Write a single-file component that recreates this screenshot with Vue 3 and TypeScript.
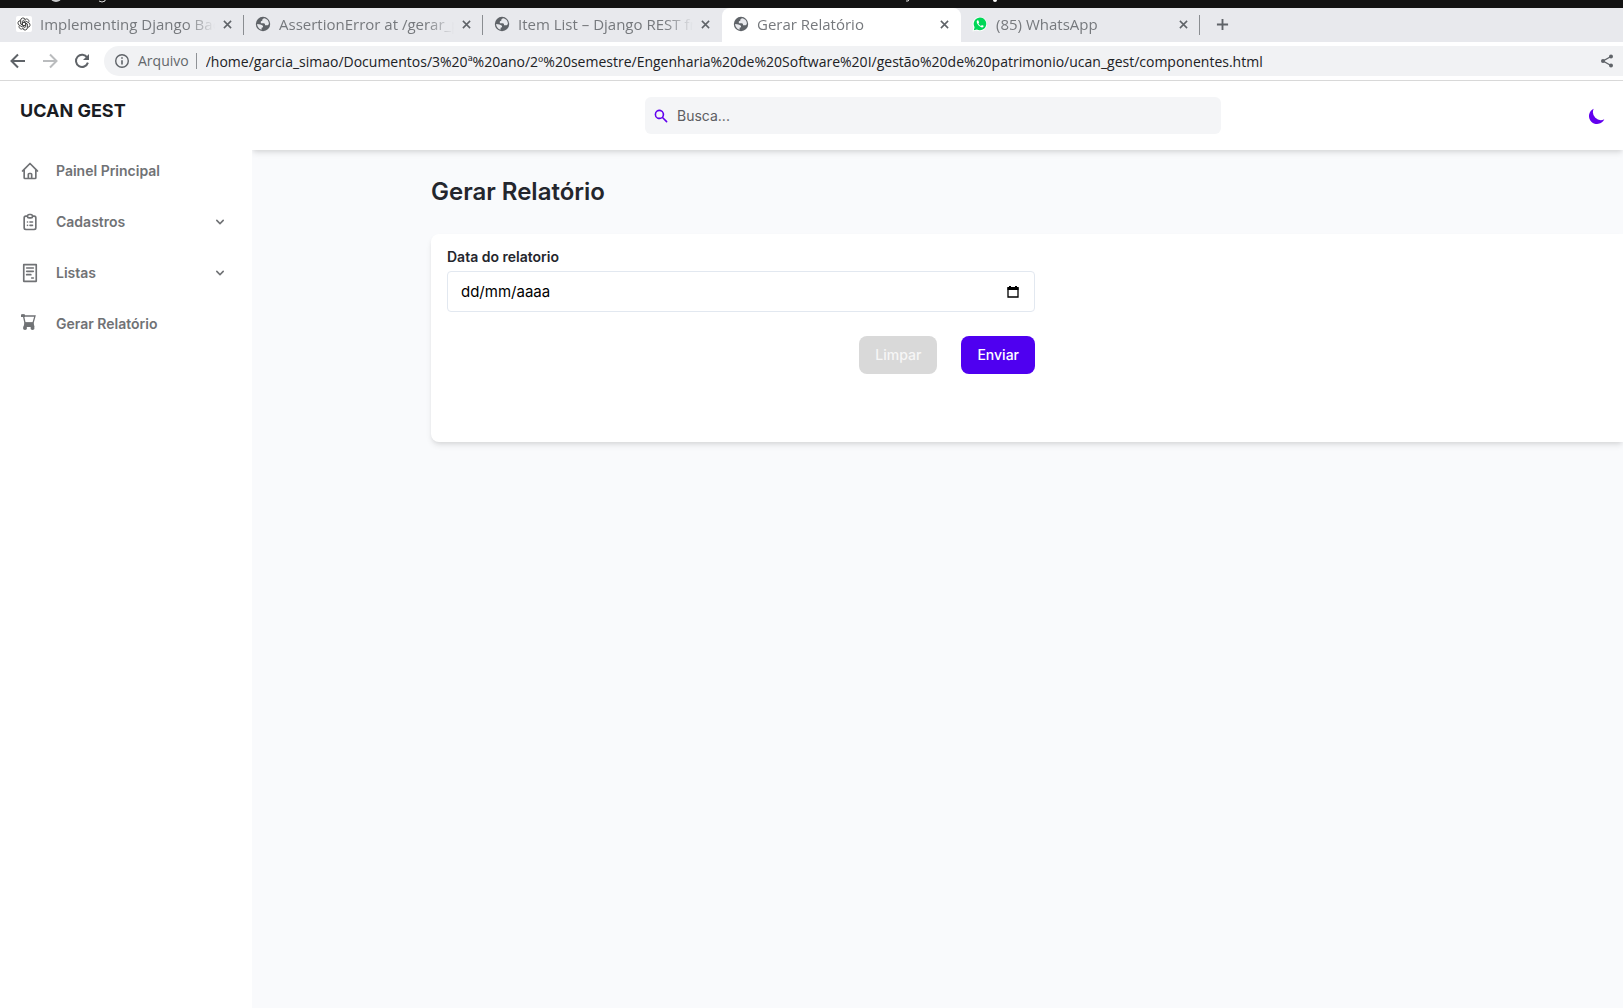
<script setup lang="ts">
interface Tab {
  title: string
  icon: 'openai' | 'globe' | 'whatsapp'
  active?: boolean
  divider?: boolean
}

interface NavItem {
  label: string
  icon: 'home' | 'clipboard' | 'receipt' | 'cart'
  expandable?: boolean
}

const tabs: Tab[] = [
  { title: 'Implementing Django Back', icon: 'openai', divider: true },
  { title: 'AssertionError at /gerar_p', icon: 'globe', divider: true },
  { title: 'Item List – Django REST fra', icon: 'globe' },
  { title: 'Gerar Relatório', icon: 'globe', active: true },
  { title: '(85) WhatsApp', icon: 'whatsapp', divider: true },
]

const navItems: NavItem[] = [
  { label: 'Painel Principal', icon: 'home' },
  { label: 'Cadastros', icon: 'clipboard', expandable: true },
  { label: 'Listas', icon: 'receipt', expandable: true },
  { label: 'Gerar Relatório', icon: 'cart' },
]

const petals = [0, 60, 120, 180, 240, 300]
const address =
  '/home/garcia_simao/Documentos/3%20ª%20ano/2º%20semestre/Engenharia%20de%20Software%20I/gestão%20de%20patrimonio/ucan_gest/componentes.html'
</script>

<template>
  <div class="window">
    <svg class="system-bar" height="8" aria-hidden="true">
      <circle cx="56" cy="-4" r="6" fill="#c9cacc" />
      <path d="M99 1Q102 3 105 1V-1" fill="none" stroke="#ddd" stroke-width="1" />
      <path d="M906 1Q909 2 909 -1" fill="none" stroke="#ddd" stroke-width="1" />
      <circle cx="995" cy="0" r="2" fill="#fff" />
    </svg>

    <div class="tab-strip">
      <div v-for="tab in tabs" :key="tab.title" class="tab" :class="{ active: tab.active, divider: tab.divider }">
        <svg v-if="tab.icon === 'openai'" class="favicon" viewBox="0 0 16 16">
          <rect width="16" height="16" rx="2" fill="#fff" />
          <g fill="none" stroke="#333" stroke-width="0.8">
            <path
              v-for="angle in petals"
              :key="angle"
              :transform="`rotate(${angle} 8 8)`"
              d="M6.3 9V5.1L9.2 3.4A2.4 2.4 0 0 1 12.6 6.7M6.3 7L8 6"
            />
          </g>
        </svg>
        <svg v-else-if="tab.icon === 'globe'" class="favicon" viewBox="0 0 16 16">
          <circle cx="8" cy="8" r="7.2" fill="#5f6368" />
          <path
            d="M9.2 2.2C7.2 2.6 7 4 7.4 4.8C5.8 4.8 5.4 6 6 7.2H8.6C9.8 7.2 10.2 8 10 9.2H12.6C13.4 9 13.8 8.4 13.9 7.6C14 5 12 2.6 9.2 2.2ZM2.1 8C2.2 10.6 3.8 13 6.6 13.8V11.8C8.2 11.6 8.4 10.6 7.6 9.6C6.6 8.4 4.8 8.6 2.1 8Z"
            fill="#e8e9ed"
          />
        </svg>
        <svg v-else class="favicon" viewBox="0 0 16 16">
          <path d="M0.5 15.5L1.5 11.6A7.2 7.2 0 1 1 4.5 14.5Z" fill="#fff" />
          <path d="M1.8 14.2L2.6 11.2A6.3 6.3 0 1 1 4.9 13.4Z" fill="#00d757" />
          <path
            d="M5.7 4.3C5 4.5 4.6 5.3 4.7 6.1C5.1 8.5 7.3 10.9 9.9 11.4C10.9 11.5 11.7 10.8 11.6 9.8L9.9 8.9L9 9.9C7.8 9.4 6.9 8.5 6.4 7.5L7.1 6.5L6.4 4.4Z"
            fill="#fff"
          />
        </svg>
        <span class="tab-title">{{ tab.title }}</span>
        <button class="tab-close" type="button" aria-label="Fechar guia">
          <svg viewBox="0 0 10 10"><path d="M1 1L9 9M9 1L1 9" stroke="#5f6368" stroke-width="1.7" /></svg>
        </button>
      </div>
      <button class="new-tab" type="button" aria-label="Nova guia">
        <svg viewBox="0 0 14 14"><path d="M7 1V13M1 7H13" stroke="#5f6368" stroke-width="2" /></svg>
      </button>
    </div>

    <div class="toolbar">
      <button class="tool" type="button" aria-label="Voltar">
        <svg viewBox="0 0 16 16"><path d="M15 8H2M8 1.5L1.5 8L8 14.5" fill="none" stroke="#5f6368" stroke-width="2" /></svg>
      </button>
      <button class="tool" type="button" aria-label="Avançar" disabled>
        <svg viewBox="0 0 16 16"><path d="M1 8H14M8 1.5L14.5 8L8 14.5" fill="none" stroke="#babcbe" stroke-width="2" /></svg>
      </button>
      <button class="tool" type="button" aria-label="Recarregar">
        <svg viewBox="0 0 16 16">
          <path d="M13.2 4.5A6.1 6.1 0 1 0 13.9 9.6" fill="none" stroke="#5f6368" stroke-width="2" />
          <path d="M15 1V7H9Z" fill="#5f6368" />
        </svg>
      </button>
      <div class="omnibox">
        <svg class="info" viewBox="0 0 16 16">
          <circle cx="8" cy="8" r="6.3" fill="none" stroke="#5f6368" stroke-width="1.4" />
          <path d="M8 7.2V11.6M8 4.2V5.8" stroke="#5f6368" stroke-width="1.6" />
        </svg>
        <span class="scheme">Arquivo</span>
        <input class="address" type="text" aria-label="Endereço" :value="address" />
        <button class="share" type="button" aria-label="Compartilhar">
          <svg viewBox="0 0 14 14">
            <path d="M11 2.5L3 7L11 11.5" fill="none" stroke="#5f6368" stroke-width="1.4" />
            <g fill="#5f6368"><circle cx="11" cy="2.5" r="2" /><circle cx="3" cy="7" r="2" /><circle cx="11" cy="11.5" r="2" /></g>
          </svg>
        </button>
      </div>
    </div>

    <div class="page">
      <aside class="sidebar">
        <a class="brand" href="#">UCAN GEST</a>
        <nav>
          <a v-for="item in navItems" :key="item.label" class="nav-item" href="#">
            <svg v-if="item.icon === 'home'" class="nav-icon line" viewBox="0 0 24 24">
              <path d="M3 12l2-2m0 0l7-7 7 7M5 10v10a1 1 0 001 1h3m10-11l2 2m-2-2v10a1 1 0 01-1 1h-3m-6 0a1 1 0 001-1v-4a1 1 0 011-1h2a1 1 0 011 1v4a1 1 0 001 1m-6 0h6" />
            </svg>
            <svg v-else-if="item.icon === 'clipboard'" class="nav-icon line" viewBox="0 0 24 24">
              <path d="M9 5H7a2 2 0 00-2 2v12a2 2 0 002 2h10a2 2 0 002-2V7a2 2 0 00-2-2h-2M9 5a2 2 0 002 2h2a2 2 0 002-2M9 5a2 2 0 012-2h2a2 2 0 012 2m-3 7h3m-3 4h3m-6-4h.01M9 16h.01" />
            </svg>
            <svg v-else-if="item.icon === 'receipt'" class="nav-icon line" viewBox="0 0 24 24">
              <path d="M4.5 2H19.5V22H4.5ZM8 6H16M8 10H16M8 14H13M14 18H16" />
            </svg>
            <svg v-else class="nav-icon" viewBox="0 0 20 20">
              <path d="M3 2H15L13 9H5L3.5 2" fill="none" stroke="currentColor" stroke-width="1.3" />
              <path d="M1 0.5Q3 -0.5 5 0.5V3H1ZM4.5 8.5H13.5L14.5 13H3.5Z" fill="currentColor" />
              <circle cx="5" cy="14" r="2" fill="currentColor" />
              <circle cx="12.5" cy="14" r="2" fill="currentColor" />
            </svg>
            <span>{{ item.label }}</span>
            <svg v-if="item.expandable" class="chevron" viewBox="0 0 20 20">
              <path d="M5.293 7.293a1 1 0 011.414 0L10 10.586l3.293-3.293a1 1 0 111.414 1.414l-4 4a1 1 0 01-1.414 0l-4-4a1 1 0 010-1.414z" />
            </svg>
          </a>
        </nav>
      </aside>

      <div class="content">
        <header class="topbar">
          <label class="search">
            <svg viewBox="0 0 20 20">
              <path d="M8 4a4 4 0 100 8 4 4 0 000-8zM2 8a6 6 0 1110.89 3.476l4.817 4.817a1 1 0 01-1.414 1.414l-4.816-4.816A6 6 0 012 8z" />
            </svg>
            <input type="text" placeholder="Busca..." aria-label="Busca" />
          </label>
          <button class="theme" type="button" aria-label="Alternar tema">
            <svg viewBox="0 0 20 20"><path d="M17.293 13.293A8 8 0 016.707 2.707a8.001 8.001 0 1010.586 10.586z" /></svg>
          </button>
        </header>

        <main>
          <h1>Gerar Relatório</h1>
          <section class="card">
            <form @submit.prevent>
              <label for="report-date">Data do relatorio</label>
              <div class="date-field">
                <input id="report-date" type="text" value="dd/mm/aaaa" />
                <svg viewBox="0 0 12 14">
                  <path d="M1 3H11V12H1Z" fill="none" stroke="#000" stroke-width="1.3" />
                  <path d="M0.5 2H11.5V5H0.5ZM2 1H4V2H2ZM8 1H10V2H8Z" />
                </svg>
              </div>
              <div class="actions">
                <button class="clear" type="reset">Limpar</button>
                <button class="send" type="submit">Enviar</button>
              </div>
            </form>
          </section>
        </main>
      </div>
    </div>
  </div>
</template>

<style>
body {
  margin: 0;
  overflow: hidden;
}
</style>

<style scoped>
* {
  box-sizing: border-box;
}
button {
  padding: 0;
  border: 0;
  background: none;
  font: inherit;
}
input {
  min-width: 0;
  padding: 0;
  border: 0;
  outline: 0;
  background: none;
  font: inherit;
}
svg {
  display: block;
  flex: none;
}
a {
  color: inherit;
  text-decoration: none;
}
.window {
  display: flex;
  flex-direction: column;
  min-height: 100vh;
  background: #fff;
  font-family: Inter, sans-serif;
  font-size: 14px;
}
.system-bar {
  width: 100%;
  background: #131313;
}
.tab-strip,
.toolbar {
  font-family: 'Open Sans', sans-serif;
}
.tab-strip {
  display: flex;
  height: 34px;
  padding-left: 5px;
  background: #e8e9ed;
}
.tab {
  display: flex;
  align-items: center;
  flex: 0 1 239px;
  min-width: 0;
  padding: 0 12px 2px 11px;
  color: #76797d;
  font-size: 15px;
}
.tab.divider {
  background: linear-gradient(#8a8d91, #8a8d91) right 7px / 1px 20px no-repeat;
}
.tab.active {
  border-radius: 8px 8px 0 0;
  background: #fff;
}
.favicon {
  width: 16px;
  height: 16px;
  margin-right: 8px;
}
.tab-title {
  flex: 1;
  overflow: hidden;
  white-space: nowrap;
  mask-image: linear-gradient(to right, #000 calc(100% - 28px), transparent);
}
.tab-close {
  margin-left: 8px;
}
.tab-close svg {
  width: 9px;
  height: 9px;
}
.new-tab {
  margin: 0 0 2px 16px;
}
.new-tab svg {
  width: 13px;
  height: 13px;
}
.toolbar {
  display: flex;
  align-items: center;
  gap: 16px;
  height: 39px;
  padding-left: 10px;
  border-bottom: 1px solid #d9d9d9;
}
.tool svg {
  width: 16px;
  height: 16px;
}
.omnibox {
  display: flex;
  align-items: center;
  flex: 1;
  height: 30px;
  margin-left: -2px;
  padding: 0 9px 0 10px;
  border-radius: 16px 0 0 16px;
  background: #f1f2f4;
  color: #202124;
}
.info {
  width: 16px;
  height: 16px;
  margin-right: 8px;
}
.scheme {
  padding-right: 7px;
  border-right: 1px solid #8f9296;
  line-height: 16px;
  color: #63676b;
}
.address {
  flex: 1;
  padding-left: 9px;
  color: #202124;
}
.share svg {
  width: 14px;
  height: 14px;
}
.page {
  display: flex;
  flex: 1;
}
.sidebar {
  z-index: 1;
  flex: 0 0 252px;
  padding: 16px 20px;
  background: #fff;
  color: #707275;
  font-weight: 600;
}
.brand {
  display: block;
  margin-bottom: 20px;
  font-size: 18px;
  font-weight: 700;
  line-height: 28px;
  color: #1a1c23;
}
.nav-item {
  display: flex;
  align-items: center;
  height: 51px;
  padding-right: 4px;
}
.nav-icon {
  width: 20px;
  height: 20px;
  margin-right: 16px;
}
.line {
  fill: none;
  stroke: currentColor;
  stroke-width: 2;
  stroke-linecap: round;
  stroke-linejoin: round;
}
.chevron {
  width: 16px;
  height: 16px;
  margin-left: auto;
  fill: currentColor;
}
.content {
  display: flex;
  flex-direction: column;
  flex: 1;
  min-width: 0;
  background: #f9fafc;
}
.topbar {
  display: flex;
  align-items: center;
  height: 69px;
  padding: 0 16px 0 393px;
  background: #fff;
  box-shadow: 0 4px 6px -1px rgba(0, 0, 0, 0.1), 0 2px 4px -1px rgba(0, 0, 0, 0.06);
}
.search {
  display: flex;
  align-items: center;
  flex: 0 1 576px;
  height: 37px;
  padding-left: 8px;
  border-radius: 6px;
  background: #f4f5f7;
}
.search svg {
  width: 16px;
  height: 16px;
  fill: #6200ee;
}
.search input {
  flex: 1;
  padding-left: 8px;
}
.search input::placeholder {
  color: #5d5e62;
  opacity: 1;
}
.theme {
  margin-left: auto;
}
.theme svg {
  width: 20px;
  height: 20px;
  fill: #6200ee;
}
main {
  padding: 24px 0 0 179px;
}
h1 {
  margin: 0 0 24px;
  font-size: 24px;
  font-weight: 600;
  line-height: 36px;
  color: #24262d;
}
.card {
  min-height: 208px;
  padding: 12px 16px;
  border-radius: 8px 0 0 8px;
  background: #fff;
  box-shadow: 0 4px 6px -1px rgba(0, 0, 0, 0.1), 0 2px 4px -1px rgba(0, 0, 0, 0.06);
}
form {
  max-width: 588px;
}
form label {
  display: block;
  margin-bottom: 4px;
  font-weight: 600;
  line-height: 21px;
  color: #24262d;
}
.date-field {
  display: flex;
  align-items: center;
  height: 41px;
  padding: 0 15px 0 13px;
  border: 1px solid #e2e8f0;
  border-radius: 4px;
}
.date-field input {
  flex: 1;
  font-size: 15px;
  color: #000;
}
.date-field svg {
  width: 12px;
  height: 14px;
}
.actions {
  display: flex;
  justify-content: flex-end;
  gap: 24px;
  margin-top: 24px;
}
.actions button {
  height: 38px;
  padding: 0 16px 2px;
  border-radius: 8px;
  font-weight: 500;
  color: #fff;
}
.actions .clear {
  background: #d9d9d9;
  color: #f6f6f6;
}
.actions .send {
  background: #4f00f0;
}
</style>
